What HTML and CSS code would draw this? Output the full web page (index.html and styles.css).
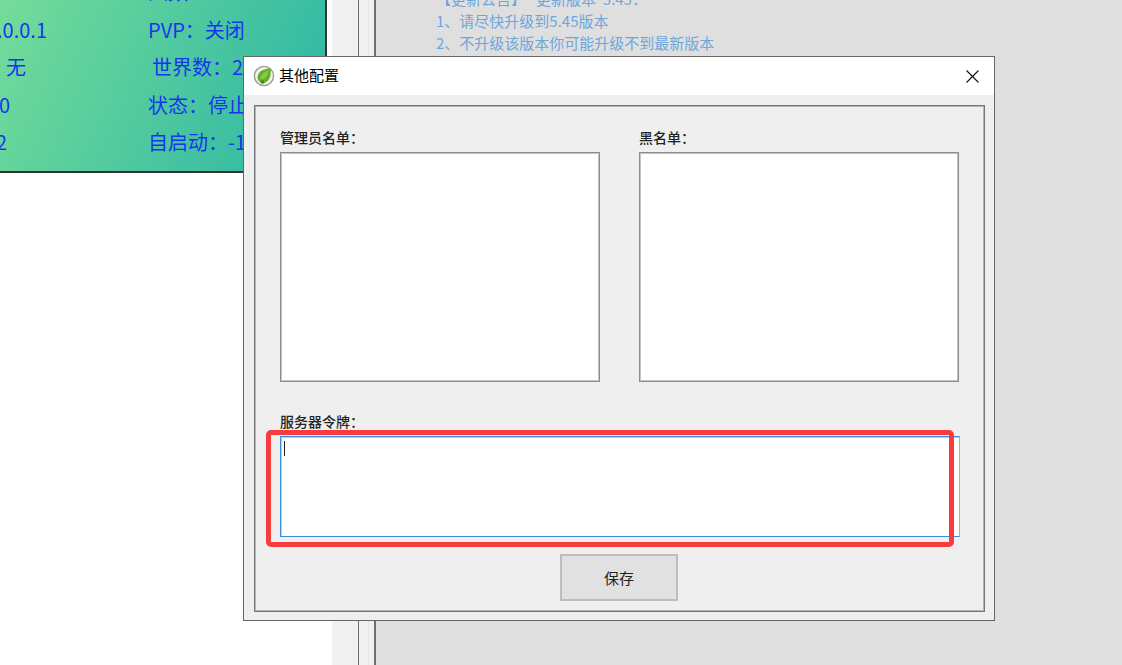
FILE: index.html
```html
<!DOCTYPE html>
<html lang="zh-CN">
<head>
<meta charset="utf-8">
<title>其他配置</title>
<link rel="stylesheet" href="styles.css">
</head>
<body>
<div class="desktop">
  <div class="blank"></div>
  <div class="strip strip-a"></div>
  <div class="strip strip-b"></div>
  <div class="notice-pane">
    <p class="notice-line">【更新公告】&nbsp;&nbsp;&nbsp;更新版本&nbsp;&nbsp;5.45：</p>
    <p class="notice-line">1、请尽快升级到5.45版本</p>
    <p class="notice-line">2、不升级该版本你可能升级不到最新版本</p>
  </div>

  <section class="status-window">
    <div class="status-row"><span class="left"></span><span class="right">人数：0</span></div>
    <div class="status-row"><span class="left pad-ip">127.0.0.1</span><span class="right">PVP：关闭</span></div>
    <div class="status-row"><span class="left pad-none">无</span><span class="right shift">世界数：2</span></div>
    <div class="status-row"><span class="left pad-zero">0</span><span class="right">状态：停止</span></div>
    <div class="status-row"><span class="left pad-two">2</span><span class="right">自启动：-1</span></div>
  </section>

  <section class="dialog">
    <header class="titlebar">
      <svg class="app-icon" viewBox="0 0 22 22" width="22" height="22" aria-hidden="true">
        <circle cx="11" cy="11" r="9.6" fill="#f4f4f0" stroke="#9a9c95" stroke-width="1.4"/>
        <path d="M17.500 3.200C12 3.400 5.500 5.500 4.600 11.500c-.4 2.600.8 4.600 2.400 5.600.8 1.100 2.400 1.700 4 1.100 3.800-1.200 6.400-4.600 6.600-8.600.1-2.300.2-4.500-.1-6.400z" fill="#68b02c"/>
        <path d="M15 5.500C11 7 8.500 9 7.500 12c-.3 1 .3 2 1.200 2.200 2.600.4 6.300-3 6.300-8.700z" fill="#86cb45"/>
        <circle cx="9.500" cy="17" r="1.800" fill="#4a7f38"/>
      </svg>
      <span class="title-text">其他配置</span>
      <svg class="close-icon" viewBox="0 0 13 13" width="13" height="13" aria-hidden="true">
        <path d="M.5.500l12 12M12.500.500l-12 12" stroke="#111" stroke-width="1.100" fill="none"/>
      </svg>
    </header>
    <div class="dialog-body">
      <div class="group">
        <div class="lists">
          <div class="field">
            <label class="field-label">管理员名单：</label>
            <div class="box list-box"></div>
          </div>
          <div class="field">
            <label class="field-label">黑名单：</label>
            <div class="box list-box"></div>
          </div>
        </div>
        <div class="field token-field">
          <label class="field-label">服务器令牌：</label>
          <div class="box token-box"><span class="caret"></span></div>
        </div>
        <div class="actions"><button class="save" type="button">保存</button></div>
      </div>
    </div>
    <div class="highlight"></div>
  </section>
</div>
</body>
</html>
```
FILE: styles.css
```css
* { box-sizing: border-box; }
html, body { margin: 0; height: 100%; }
body {
  overflow: hidden;
  font-family: "Noto Sans CJK SC", "Noto Sans", sans-serif;
  background: #fff;
}
.desktop {
  position: relative;
  display: flex;
  width: 1122px;
  height: 665px;
  overflow: hidden;
}
.blank { width: 332px; background: #fff; }
.strip { background: #f0f0f0; }
.strip-a { width: 27px; border-right: 1px solid #6e6e6e; }
.strip-b { width: 17px; border-right: 2px solid #6e6e6e; box-shadow: inset -5px 0 0 #f0f0f0, inset -6px 0 0 #e4e4e4; }
.notice-pane {
  flex: 1;
  background: #dfdfdf;
  padding-left: 60px;
  color: #6ea6dc;
  font-size: 15px;
  line-height: 22px;
}
.notice-line { margin: 0; white-space: pre; }
.notice-line:first-child { margin-top: -12px; }

.status-window {
  position: absolute;
  left: -200px;
  top: -30px;
  width: 527px;
  height: 203px;
  border-right: 2px solid #333;
  border-bottom: 2px solid #333;
  background: linear-gradient(115deg, #b0f098 0%, #70da9a 38%, #2ab5a5 100%);
  color: #1636ee;
  font-size: 20px;
  padding-top: 3px;
}
.status-row {
  display: flex;
  height: 37.500px;
  align-items: center;
  white-space: nowrap;
}
.left { width: 348px; text-align: right; }
.pad-ip { padding-right: 101px; }
.pad-none { padding-right: 122px; }
.pad-zero { padding-right: 138px; }
.pad-two { padding-right: 141px; }
.shift { margin-left: 4px; }

.dialog {
  position: absolute;
  left: 243px;
  top: 56px;
  width: 752px;
  height: 565px;
  border: 1px solid #666;
  background: #efefef;
  display: flex;
  flex-direction: column;
}
.titlebar {
  height: 38px;
  background: #fff;
  display: flex;
  align-items: center;
  padding: 0 15px 0 9px;
  flex: none;
}
.app-icon { flex: none; }
.title-text {
  margin-left: 4px;
  margin-top: -3px;
  font-size: 15px;
  color: #000;
}
.close-icon { margin-left: auto; margin-top: 1px; }
.dialog-body { flex: 1; padding: 10px 9px 8px 10px; }
.group {
  height: 507px;
  border: 1px solid #777;
  box-shadow: inset 0 0 0 1px #b4b4b4;
  padding: 22px 24px 0 25px;
}
.lists {
  display: grid;
  grid-template-columns: 320px 320px;
  column-gap: 39px;
}
.field-label {
  display: block;
  height: 24px;
  line-height: 18px;
  font-size: 14px;
  font-weight: 500;
  color: #222;
}
.box { background: #fff; }
.list-box {
  height: 230px;
  border: 1px solid #8c8c8c;
  box-shadow: inset 0 0 0 1px #c4c4c4;
}
.token-field { margin-top: 30px; }
.token-box {
  width: 680px;
  height: 101px;
  border: 1px solid #3c8fe0;
  border-right-color: #84bcef;
  box-shadow: inset 1px 1px 0 #a9cff2;
  padding: 4px 3px;
}
.caret { display: block; width: 1px; height: 15px; background: #222; }
.actions { display: flex; justify-content: center; margin-top: 17px; padding-right: 2px; }
.save {
  width: 118px;
  height: 47px;
  background: #e1e1e1;
  border: 2px solid #bdbdbd;
  font: inherit;
  font-size: 15px;
  color: #222;
  padding: 0;
}
.highlight {
  position: absolute;
  left: 22px;
  top: 373px;
  width: 688px;
  height: 117px;
  border: 5px solid #f63c3f;
  border-radius: 5px;
  pointer-events: none;
}
```
